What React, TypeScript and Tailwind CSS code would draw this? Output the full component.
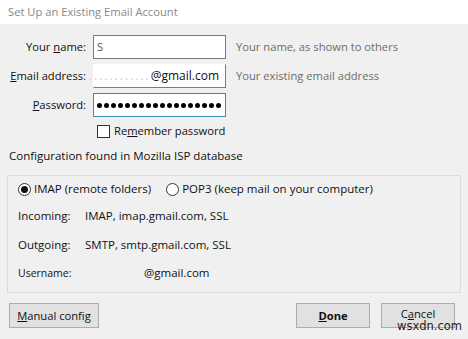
import * as React from "react";

const font = { fontFamily: "'Open Sans', 'Noto Sans', sans-serif" };

const Radio = ({ checked }: { checked?: boolean }) => (
  <span className="flex h-[13px] w-[13px] items-center justify-center rounded-full border border-[#333] bg-white">
    {checked && <span className="h-[7px] w-[7px] rounded-full bg-[#111]" />}
  </span>
);

const Button = ({ children, className }: { children: React.ReactNode; className?: string }) => (
  <div
    className={`flex h-[25px] items-center justify-center border border-[#adadad] bg-[#e1e1e1] text-[#111] ${className ?? ""}`}
  >
    {children}
  </div>
);

export default function App() {
  return (
    <div
      className="relative h-[339px] w-[468px] overflow-hidden bg-[#f0f0f0] text-[11.2px] leading-[18px] text-[#111]"
      style={font}
    >
      <div className="flex h-[24px] items-center bg-white pl-[8px] text-[#888]">Set Up an Existing Email Account</div>

      <div className="mt-[11px] grid grid-cols-[86px_133px_1fr] items-center gap-x-[7px] gap-y-[5px]">
        <div className="text-right">
          Your <span className="underline">n</span>ame:
        </div>
        <div className="flex h-[24px] items-center border border-[#7a7a7a] bg-white pl-[3px] text-[#555]">S</div>
        <div className="pl-[3px] text-[#6d6d6d]">Your name, as shown to others</div>

        <div className="text-right">
          <span className="underline">E</span>mail address:
        </div>
        <div className="flex h-[24px] items-center justify-end border border-[#7a7a7a] border-l-white border-t-white bg-white pr-[6px] text-[12px]">
          <span className="mr-auto pl-[8px] tracking-[2px] text-[#ccc]">.............</span>@gmail.com
        </div>
        <div className="pl-[3px] text-[#6d6d6d]">Your existing email address</div>

        <div className="text-right">
          <span className="underline">P</span>assword:
        </div>
        <div className="flex h-[24px] items-center gap-[2px] border border-[#3a8bb5] bg-white pl-[3px]">
          {Array.from({ length: 18 }).map((_, i) => (
            <span key={i} className="h-[5px] w-[5px] rounded-full bg-black" />
          ))}
        </div>
        <div />
      </div>

      <div className="mt-[5px] flex items-center gap-[4px] pl-[97px]">
        <span className="h-[13px] w-[13px] border border-[#333] bg-white" />
        <span>
          Re<span className="underline">m</span>ember password
        </span>
      </div>

      <div className="mt-[7px] pl-[9px] text-[11.5px]">Configuration found in Mozilla ISP database</div>

      <div className="mx-[7px] mt-[10px] h-[118px] border border-[#dcdcdc] px-[10px] text-[11.5px]">
        <div className="mt-[4px] flex items-center">
          <Radio checked />
          <span className="ml-[3px]">IMAP (remote folders)</span>
          <span className="ml-[15px]">
            <Radio />
          </span>
          <span className="ml-[3px]">POP3 (keep mail on your computer)</span>
        </div>
        <div className="mt-[9px] grid grid-cols-[67px_1fr]">
          <div>Incoming:</div>
          <div>IMAP, imap.gmail.com, SSL</div>
          <div className="mt-[11px]">Outgoing:</div>
          <div className="mt-[11px]">SMTP, smtp.gmail.com, SSL</div>
          <div className="mt-[10px] text-[10.5px]">Username:</div>
          <div className="mt-[10px] pl-[59px]">@gmail.com</div>
        </div>
      </div>

      <div className="mt-[10px] flex items-center px-[9px]">
        <Button className="w-[90px]">
          <span>
            <span className="underline">M</span>anual config
          </span>
        </Button>
        <Button className="ml-auto w-[74px] font-bold">
          <span>
            <span className="underline">D</span>one
          </span>
        </Button>
        <Button className="ml-[11px] mr-[4px] w-[74px]">
          <span className="-mt-[4px]">
            C<span className="underline">a</span>ncel
          </span>
        </Button>
      </div>

      <div
        className="absolute left-[397px] top-[320px] text-[11.5px] leading-[13px] text-[#222]"
        style={{ fontFamily: "'DejaVu Sans', sans-serif" }}
      >
        wsxdn.com
      </div>
    </div>
  );
}
